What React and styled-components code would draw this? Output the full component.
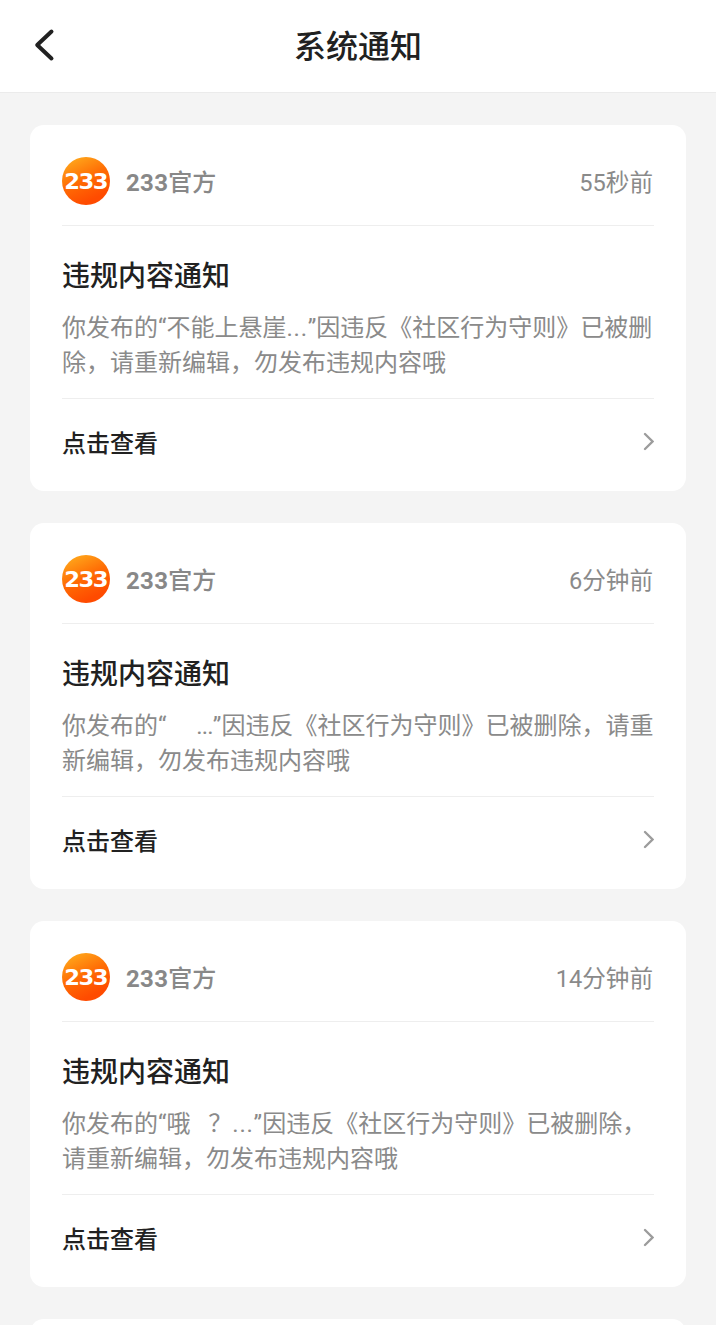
import React from "react";
import styled, { createGlobalStyle } from "styled-components";

const GlobalStyle = createGlobalStyle`
  * {
    box-sizing: border-box;
  }

  body {
    margin: 0;
    background: #f4f4f4;
    color: #212121;
    font-family: Roboto, "Noto Sans CJK SC", sans-serif;
  }
`;

const Screen = styled.div`
  height: 1325px;
  overflow: hidden;
  background: #f4f4f4;
`;

const Header = styled.header`
  display: grid;
  grid-template-columns: 88px 1fr 88px;
  align-items: center;
  height: 93px;
  background: #fff;
  border-bottom: 1px solid #ebebeb;
`;

const BackButton = styled.button`
  display: flex;
  align-items: center;
  height: 92px;
  padding: 0 0 3px 32px;
  border: 0;
  background: none;
  color: #212121;
`;

const HeaderTitle = styled.h1`
  margin: 0;
  padding-top: 2px;
  font-size: 32px;
  font-weight: 500;
  line-height: 46px;
  text-align: center;
`;

const NoticeList = styled.main`
  display: flex;
  flex-direction: column;
  gap: 32px;
  padding: 32px 30px 0;
`;

const Card = styled.article`
  flex: none;
  height: 366px;
  padding: 0 32px;
  border-radius: 14px;
  background: #fff;
`;

const CardTop = styled.div`
  display: flex;
  align-items: center;
  height: 101px;
  padding-top: 12px;
  border-bottom: 1px solid #eee;
`;

const Sender = styled.span`
  flex: 1;
  margin-left: 16px;
  padding-top: 3px;
  color: #888;
  font-size: 24px;
  font-weight: 500;
  line-height: 36px;

  b {
    font-weight: 700;
    letter-spacing: 0.3px;
  }
`;

const Time = styled.time`
  padding: 3px 1px 0 0;
  color: #8a8a8a;
  font-size: 23.6px;
  line-height: 36px;
`;

const CardBody = styled.div`
  height: 173px;
  padding-top: 30px;
  border-bottom: 1px solid #eee;
`;

const NoticeTitle = styled.h2`
  margin: 0;
  font-size: 28px;
  font-weight: 500;
  line-height: 42px;
`;

const Description = styled.p`
  margin: 13px -2px 0 0;
  color: #8a8a8a;
  font-size: 24px;
  line-height: 35px;
  white-space: pre-wrap;
`;

const Dots = styled.span`
  letter-spacing: ${(props) => (props.$wide ? "0.75px" : "-0.8px")};
`;

const CardLink = styled.div`
  display: flex;
  align-items: center;
  justify-content: space-between;
  height: 86px;
  font-size: 24px;
  font-weight: 500;
  line-height: 36px;
`;

const LinkLabel = styled.span`
  padding-top: 3px;
`;

const Logo = () => (
  <svg width="48" height="48" viewBox="0 0 48 48">
    <defs>
      <linearGradient id="logo-bg" x1="0.2" y1="0.05" x2="0.6" y2="0.9">
        <stop offset="0" stopColor="#ffa51a" />
        <stop offset="0.5" stopColor="#ff6d05" />
        <stop offset="1" stopColor="#ff4b00" />
      </linearGradient>
    </defs>
    <circle cx="24" cy="24" r="24" fill="url(#logo-bg)" />
    <text
      transform="translate(2.2 31.6) scale(1.08 1)"
      fill="#fff"
      fontFamily="DejaVu Sans, sans-serif"
      fontWeight="700"
      fontSize="21"
      letterSpacing="-1.4"
    >
      233
    </text>
  </svg>
);

const BackIcon = () => (
  <svg width="24" height="34" viewBox="0 0 24 34" fill="none">
    <path
      d="M19.5 3.5L5.2 17L19.5 30.5"
      stroke="currentColor"
      strokeWidth="4"
      strokeLinecap="round"
      strokeLinejoin="round"
    />
  </svg>
);

const ArrowIcon = () => (
  <svg width="12" height="20" viewBox="0 0 12 20" fill="none">
    <path d="M3 2L10.5 9.5L3 17" stroke="#9c9c9c" strokeWidth="2.3" strokeLinecap="round" />
  </svg>
);

const notices = [
  { id: 1, time: "55秒前", post: "不能上悬崖", wide: true },
  { id: 2, time: "6分钟前", post: "     ", wide: false },
  { id: 3, time: "14分钟前", post: "哦   ？", wide: true },
];

const NoticeCard = ({ notice }) => (
  <Card>
    <CardTop>
      <Logo />
      <Sender>
        <b>233</b>官方
      </Sender>
      <Time>{notice.time}</Time>
    </CardTop>
    <CardBody>
      <NoticeTitle>违规内容通知</NoticeTitle>
      <Description>
        {`你发布的“${notice.post}`}
        <Dots $wide={notice.wide}>...</Dots>
        ”因违反《社区行为守则》已被删除，请重新编辑，勿发布违规内容哦
      </Description>
    </CardBody>
    <CardLink>
      <LinkLabel>点击查看</LinkLabel>
      <ArrowIcon />
    </CardLink>
  </Card>
);

const App = () => (
  <>
    <GlobalStyle />
    <Screen lang="zh-CN">
      <Header>
        <BackButton type="button" aria-label="返回">
          <BackIcon />
        </BackButton>
        <HeaderTitle>系统通知</HeaderTitle>
      </Header>
      <NoticeList>
        {notices.map((notice) => (
          <NoticeCard key={notice.id} notice={notice} />
        ))}
        <Card />
      </NoticeList>
    </Screen>
  </>
);

export default App;
